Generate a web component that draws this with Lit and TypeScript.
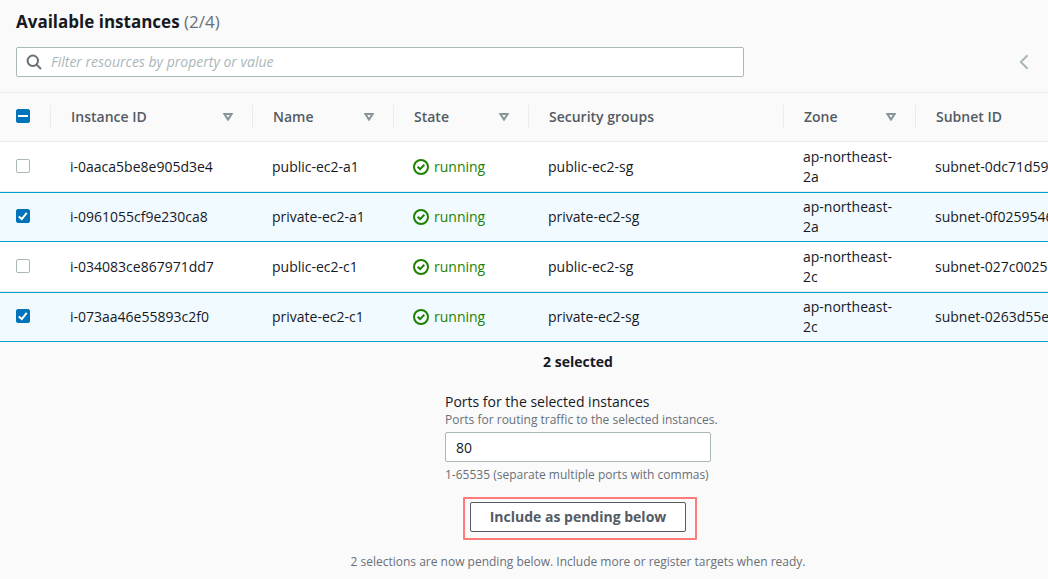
import { LitElement, html, css, svg, nothing } from "lit";
import { customElement, state } from "lit/decorators.js";

interface Instance {
  id: string;
  name: string;
  group: string;
  zone: string;
  subnet: string;
}

const INSTANCES: Instance[] = [
  { id: "i-0aaca5be8e905d3e4", name: "public-ec2-a1", group: "public-ec2-sg", zone: "ap-northeast-2a", subnet: "subnet-0dc71d59" },
  { id: "i-0961055cf9e230ca8", name: "private-ec2-a1", group: "private-ec2-sg", zone: "ap-northeast-2a", subnet: "subnet-0f0259546" },
  { id: "i-034083ce867971dd7", name: "public-ec2-c1", group: "public-ec2-sg", zone: "ap-northeast-2c", subnet: "subnet-027c0025" },
  { id: "i-073aa46e55893c2f0", name: "private-ec2-c1", group: "private-ec2-sg", zone: "ap-northeast-2c", subnet: "subnet-0263d55e" },
];

const COLUMNS = [
  { label: "Instance ID", cls: "c-id", sortable: true },
  { label: "Name", cls: "c-name", sortable: true },
  { label: "State", cls: "c-state", sortable: true },
  { label: "Security groups", cls: "c-group", sortable: false },
  { label: "Zone", cls: "c-zone", sortable: true },
  { label: "Subnet ID", cls: "c-subnet", sortable: false },
];

const sortIcon = html`<svg class="sort" viewBox="0 0 10 8" aria-hidden="true">
  ${svg`<path d="M1.4 1h7.2L5 6.6z" fill="none" stroke="currentColor" stroke-width="2" />`}
</svg>`;

const okIcon = html`<svg class="ok" viewBox="0 0 16 16" aria-hidden="true">
  ${svg`<circle cx="8" cy="8" r="7" fill="none" stroke="currentColor" stroke-width="2" />
  <path d="M4.6 7.8l2.5 2.3 4.2-4.3" fill="none" stroke="currentColor" stroke-width="2" />`}
</svg>`;

@customElement("app-root")
export class AppRoot extends LitElement {
  static styles = css`
    :host {
      display: block;
      min-height: 100vh;
      box-sizing: border-box;
      overflow-x: hidden;
      background: #fafafa;
      color: #16191f;
      font: 14px/20px "Open Sans", "Noto Sans", sans-serif;
    }
    * { box-sizing: border-box; }
    input, button { font: inherit; color: inherit; }

    .header { padding: 8px 16px 15px; border-bottom: 1px solid #eaeded; }
    h2 { margin: 0 0 11px; font-size: 17px; line-height: 28px; font-weight: 700; }
    .count { font-weight: 400; color: #687078; }
    .toolbar { display: flex; align-items: center; justify-content: space-between; gap: 24px; }
    .filter {
      flex: 0 1 728px;
      display: flex;
      align-items: center;
      gap: 9px;
      height: 30px;
      padding: 0 9px;
      background: #fff;
      border: 1px solid #aab7b8;
      border-radius: 2px;
    }
    .filter svg { flex: none; width: 16px; height: 16px; color: #687078; }
    .filter input { flex: 1; min-width: 0; padding: 0; border: 0; outline: 0; background: none; }
    .filter input::placeholder { color: #aab7b8; font-style: italic; opacity: 1; }
    .prev { flex: none; display: flex; padding: 0; border: 0; background: none; color: #aab7b8; }
    .prev svg { width: 16px; height: 16px; }

    .scroll { overflow-x: hidden; }
    .content { min-width: 1156px; }
    table { width: 100%; table-layout: fixed; border-collapse: separate; border-spacing: 0; }
    .c-check { width: 51px; }
    .c-id { width: 202px; }
    .c-name { width: 141px; }
    .c-state { width: 135px; }
    .c-group { width: 255px; }
    .c-zone { width: 132px; }
    th {
      padding: 12px 0;
      border-bottom: 1px solid #eaeded;
      text-align: left;
      font-weight: 600;
      color: #545b64;
    }
    .head {
      display: flex;
      align-items: center;
      justify-content: space-between;
      width: 100%;
      height: 24px;
      padding: 0 19px 0 20px;
      border: 0;
      border-right: 1px solid #eaeded;
      background: none;
      text-align: left;
    }
    th:first-child .head { padding: 0 0 2px 16px; }
    th:last-child .head { border-right: 0; }
    .sort { width: 10px; height: 8px; color: #879596; }
    td {
      padding: 4px 19px;
      background: #fff;
      border-top: 1px solid transparent;
      border-bottom: 1px solid #eaeded;
      vertical-align: middle;
    }
    td:first-child { padding: 4px 16px 6px; }
    .selected td { background: #f1faff; border-color: #00a1c9; }
    .status { display: flex; align-items: center; gap: 5px; color: #1d8102; }
    .ok { width: 16px; height: 16px; }

    .box {
      appearance: none;
      display: block;
      width: 14px;
      height: 14px;
      margin: 0;
      background: #fff center / 14px 14px no-repeat;
      border: 1px solid #aab7b8;
      border-radius: 2px;
    }
    .box:checked, .box:indeterminate { border-color: #0073bb; background-color: #0073bb; background-origin: border-box; }
    .box:checked { background-image: url("data:image/svg+xml,%3Csvg xmlns='http://www.w3.org/2000/svg' viewBox='0 0 14 14'%3E%3Cpath d='M2.8 7.4l3 2.7 4.9-6.3' fill='none' stroke='%23fff' stroke-width='2'/%3E%3C/svg%3E"); }
    .box:indeterminate { background-image: url("data:image/svg+xml,%3Csvg xmlns='http://www.w3.org/2000/svg' viewBox='0 0 14 14'%3E%3Cpath d='M2 7h10' stroke='%23fff' stroke-width='2'/%3E%3C/svg%3E"); }

    .footer { display: flex; flex-direction: column; align-items: center; padding: 10px 16px 8px; }
    .total { font-weight: 700; }
    .field { display: flex; flex-direction: column; width: 266px; margin-top: 20px; white-space: nowrap; }
    .hint { font-size: 12px; line-height: 16px; color: #687078; }
    .field input {
      height: 30px;
      margin: 4px 0 5px;
      padding: 0 10px;
      background: #fff;
      border: 1px solid #aab7b8;
      border-radius: 2px;
    }
    .action { position: relative; margin: 19px 0 22px; }
    .action::after {
      content: "";
      position: absolute;
      inset: -5px -11px -8px -7px;
      border: 2px solid #ff7b7b;
      border-radius: 1px;
      pointer-events: none;
    }
    .include {
      display: block;
      height: 30px;
      padding: 0 19px;
      background: #fff;
      border: 1px solid #545b64;
      border-radius: 2px;
      color: #545b64;
      font-weight: 700;
    }
  `;

  @state() private selected = new Set<string>([INSTANCES[1].id, INSTANCES[3].id]);

  private toggle(id: string) {
    const next = new Set(this.selected);
    next.has(id) ? next.delete(id) : next.add(id);
    this.selected = next;
  }

  private toggleAll() {
    this.selected = this.selected.size === INSTANCES.length ? new Set() : new Set(INSTANCES.map((i) => i.id));
  }

  private row(i: Instance) {
    const on = this.selected.has(i.id);
    return html`<tr class=${on ? "selected" : nothing}>
      <td><input class="box" type="checkbox" aria-label=${i.id} .checked=${on} @change=${() => this.toggle(i.id)} /></td>
      <td>${i.id}</td>
      <td>${i.name}</td>
      <td><span class="status">${okIcon}<span>running</span></span></td>
      <td>${i.group}</td>
      <td>${i.zone}</td>
      <td>${i.subnet}</td>
    </tr>`;
  }

  render() {
    const n = this.selected.size;
    const total = INSTANCES.length;
    return html`
      <header class="header">
        <h2>Available instances <span class="count">(${n}/${total})</span></h2>
        <div class="toolbar">
          <label class="filter">
            <svg viewBox="0 0 16 16" aria-hidden="true">
              <circle cx="6.8" cy="6.8" r="5.2" fill="none" stroke="currentColor" stroke-width="2" />
              <path d="M10.6 10.6l4.4 4.4" stroke="currentColor" stroke-width="2" />
            </svg>
            <input type="text" aria-label="Filter resources" placeholder="Filter resources by property or value" />
          </label>
          <button class="prev" aria-label="Previous page">
            <svg viewBox="0 0 16 16" aria-hidden="true">
              <path d="M11.6 1.2L4.8 8l6.8 6.8" fill="none" stroke="currentColor" stroke-width="2" />
            </svg>
          </button>
        </div>
      </header>
      <div class="scroll">
        <div class="content">
          <table>
            <thead>
              <tr>
                <th class="c-check">
                  <span class="head"><input class="box" type="checkbox" aria-label="Select all"
                    .indeterminate=${n > 0 && n < total} .checked=${n === total} @change=${this.toggleAll} /></span>
                </th>
                ${COLUMNS.map((c) => html`<th class=${c.cls}>${c.sortable
                  ? html`<button class="head">${c.label}${sortIcon}</button>`
                  : html`<span class="head">${c.label}</span>`}</th>`)}
              </tr>
            </thead>
            <tbody>${INSTANCES.map((i) => this.row(i))}</tbody>
          </table>
          <section class="footer">
            <div class="total">${n} selected</div>
            <div class="field">
              <label for="ports">Ports for the selected instances</label>
              <span class="hint">Ports for routing traffic to the selected instances.</span>
              <input id="ports" type="text" value="80" />
              <span class="hint">1-65535 (separate multiple ports with commas)</span>
            </div>
            <div class="action"><button class="include">Include as pending below</button></div>
            <div class="hint">2 selections are now pending below. Include more or register targets when ready.</div>
          </section>
        </div>
      </div>
    `;
  }
}
